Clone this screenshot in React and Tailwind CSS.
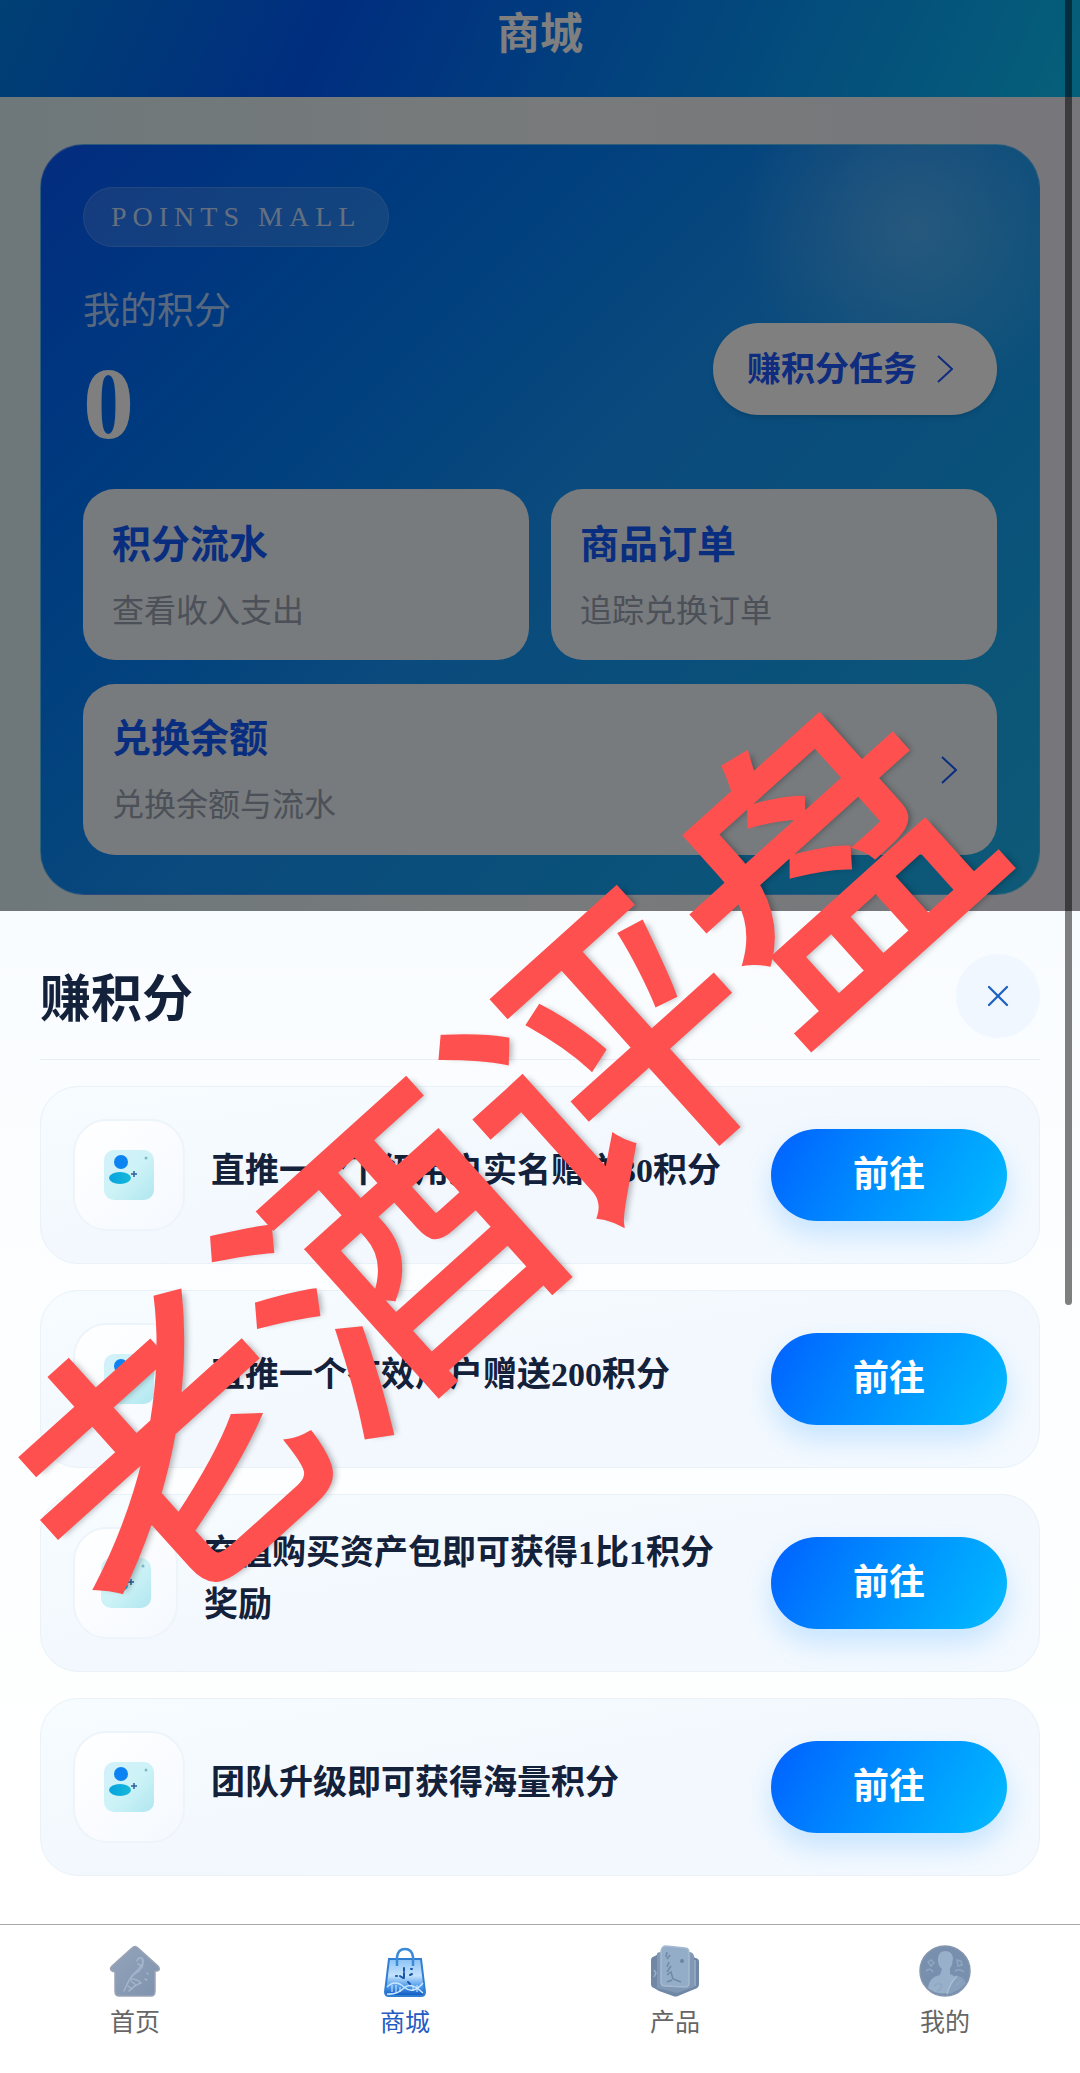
import { X } from "lucide-react"

const shortcuts = [
  { title: "积分流水", desc: "查看收入支出" },
  { title: "商品订单", desc: "追踪兑换订单" },
]

const tasks = [
  "直推一个下级用户实名赠送30积分",
  "直推一个有效用户赠送200积分",
  "充值购买资产包即可获得1比1积分奖励",
  "团队升级即可获得海量积分",
]

function HomeIcon() {
  return (
    <svg className="size-[52px]" viewBox="0 0 52 52">
      <defs>
        <linearGradient id="home" x1="0" y1="0" x2="1" y2="1">
          <stop offset="0" stopColor="#94a5bb" />
          <stop offset="1" stopColor="#7e92ae" />
        </linearGradient>
      </defs>
      <path
        d="M23 3Q26 0 29 3L49 21Q52 25 48 26L46 26V46Q46 51 42 51H10Q6 51 6 46V27L3 26Q0 24 3 21Z"
        fill="url(#home)"
        stroke="#9aa3b4"
        strokeWidth="1.5"
        strokeLinejoin="round"
      />
      <g fill="none" stroke="#a3b4c9" strokeWidth="1.5" strokeLinecap="round">
        <path d="M28 16q1-4 5-3 3 3-1 8t-8 9-9 16" />
        <path d="M33 14q3 6-3 12-8 4-8 8 6 0 10 4-6 2-12 8" />
        <path d="M29 19l4 2M22 36l5 4M19 41l4 3M38 28l1 1M36 34l2 1" />
      </g>
    </svg>
  )
}

function BagIcon() {
  return (
    <svg className="size-[52px]" viewBox="0 0 52 52">
      <defs>
        <linearGradient id="bag" x1="0" y1="0" x2="0" y2="1">
          <stop offset="0" stopColor="#8cc2f5" />
          <stop offset="0.45" stopColor="#c4e2fd" />
          <stop offset="0.75" stopColor="#4c98ea" />
          <stop offset="1" stopColor="#0b55bd" />
        </linearGradient>
      </defs>
      <path d="M10 14H42L46 47Q46 51 42 51H10Q6 51 6 47Z" fill="url(#bag)" stroke="#2f7ed0" strokeWidth="2" />
      <path d="M18 21V12Q19 4 26 4T34 12V21" fill="none" stroke="#3b8bd8" strokeWidth="2.5" />
      <path d="M8 42q8-8 17 0t19-4M8 49q10 1 17-6t19 5" fill="none" stroke="#c8e8ff" strokeWidth="1.5" />
      <path d="M13 40v7M17 40v8M21 42v5M34 41v5M38 40v7" stroke="#d7efff" strokeWidth="1" />
      <path d="M25 23v3M25 28v5M21 31l3 2M31 30l2-1M17 31h1M29 37l2 2M32 24h1" stroke="#1756a6" strokeWidth="2" strokeLinecap="round" />
    </svg>
  )
}

function ProductIcon() {
  return (
    <svg className="size-[52px]" viewBox="0 0 52 52">
      <path d="M2 15Q2 12 6 11L9 9H43L46 13Q50 13 50 17V39Q50 43 46 44L41 46 29 51Q27 52 24 51L10 46 5 43Q2 42 2 39Z" fill="#7088a5" />
      <path d="M8 9Q8 7 12 7H41Q45 8 45 12V42L28 48 8 43Z" fill="#8098b4" />
      <path d="M17 1 36 3Q40 3 40 8V38Q40 42 36 42L16 41Q12 41 12 37V6Q13 1 17 1Z" fill="#93acc8" stroke="#a5bad0" strokeWidth="1.5" />
      <path d="M18 7l-1 5M21 10l-3 4M20 17l-2 5M22 21l-4 6M18 30l4-3 2 7 8 3M18 37l5-2" fill="none" stroke="#6f88a5" strokeWidth="1.5" />
      <circle cx="33" cy="16" r="2" fill="#6a84a2" />
      <path d="M5 25l2 3-2 4M46 15v26" fill="none" stroke="#9ab0c8" strokeWidth="1.5" />
    </svg>
  )
}

function ProfileIcon() {
  return (
    <svg className="size-[52px]" viewBox="0 0 52 52">
      <circle cx="26" cy="26" r="25" fill="#7890ae" stroke="#8496ad" strokeWidth="1.5" />
      <path d="M9 43Q10 32 21 30L23 24Q18 20 19 13 20 6 26 6 33 6 34 13 34 19 31 24V29L37 32 28 48Q17 50 9 43Z" fill="#98b0ca" />
      <path d="M38 31Q31 38 28 49 40 47 47 38Q44 31 38 31Z" fill="#88a0bc" />
      <path d="M38 31Q31 38 28 49" fill="none" stroke="#a9bed3" strokeWidth="1.5" />
      <g fill="none" stroke="#90a7c1" strokeWidth="1.5">
        <path d="M9 17l3-2 3 3-3 3zM7 26q4-4 7 1M38 15l4 1 1 4-4 1zM36 26q5-3 9 1M37 40l5-4M15 41q4-4 8-1-1 5-5 6" />
      </g>
    </svg>
  )
}

const tabs = [
  { label: "首页", Icon: HomeIcon },
  { label: "商城", Icon: BagIcon, active: true },
  { label: "产品", Icon: ProductIcon },
  { label: "我的", Icon: ProfileIcon },
]

function Arrow() {
  return (
    <svg className="h-7 w-4" viewBox="0 0 16 28" fill="none" stroke="currentColor" strokeWidth="2">
      <path d="M1 1 15 14 1 27" />
    </svg>
  )
}

function InviteIcon() {
  return (
    <svg className="w-[50px]" viewBox="0 0 50 50">
      <defs>
        <linearGradient id="invite" x1="0" y1="0" x2="1" y2="1">
          <stop offset="0" stopColor="#d3f1f9" />
          <stop offset="0.5" stopColor="#cdf3f7" />
          <stop offset="1" stopColor="#b0e6f0" />
        </linearGradient>
        <linearGradient id="invite-body" x1="0" y1="0" x2="1" y2="0">
          <stop offset="0" stopColor="#06a3e0" />
          <stop offset="1" stopColor="#16b8d8" />
        </linearGradient>
      </defs>
      <rect width="50" height="50" rx="10" fill="url(#invite)" />
      <circle cx="17" cy="12" r="7" fill="#0b83f2" />
      <ellipse cx="16" cy="28" rx="11" ry="6" fill="url(#invite-body)" />
      <path d="M30 21v6M27 24h6" stroke="#2b5f9c" strokeWidth="1.5" />
      <circle cx="42" cy="8" r="1.5" fill="#7fb9c4" />
    </svg>
  )
}

function TaskRow({ text }) {
  return (
    <li className="flex h-[178px] items-center gap-[26px] rounded-[38px] border border-[#e8f2f8] bg-linear-to-br from-[#f6fcff] via-[#f3f8fe] to-[#f3f9ff] px-8">
      <span className="flex h-[112px] w-[112px] items-center justify-center rounded-[34px] border-2 border-[#edf4fa] bg-linear-to-br from-white to-[#f5f9ff]">
        <InviteIcon />
      </span>
      <p className="pb-2 text-[34px] leading-[52px] font-bold text-[#14213a]">{text}</p>
      <button className="ml-auto h-[92px] w-[236px] shrink-0 cursor-pointer rounded-full bg-linear-120 from-[#0a5fff] to-[#10bcff] text-[36px] font-bold text-white shadow-[0_14px_28px_rgba(20,150,255,0.2)]">
        前往
      </button>
    </li>
  )
}

export default function App() {
  return (
    <div className="relative flex min-h-screen flex-col overflow-hidden bg-white font-['Liberation_Serif','Noto_Sans_CJK_SC',sans-serif]">
      <div className="relative bg-linear-to-r from-[#dcf0f4] via-[#f0f5f7] to-[#eeeef6] pb-4">
        <header className="flex h-[97px] items-start justify-center bg-linear-[115deg] from-[#0080e8] via-[#005cff] via-30% to-[#0cc0f4] pt-1">
          <h1 className="text-[43px] leading-[62px] font-bold text-white">商城</h1>
        </header>

        <section className="relative mx-10 mt-[47px] overflow-hidden rounded-[44px] border border-white/30 bg-linear-135 from-[#0858ff] via-[#1494fa] to-[#1cb4ee] px-[42px] pt-[42px] pb-[39px]">
          <div className="absolute -top-24 -right-14 size-[360px] rounded-full bg-radial from-white/25 to-transparent to-70%" />

          <span className="inline-block rounded-full border border-white/15 bg-white/15 px-[27px] text-[28px] leading-[58px] tracking-[6px] text-white/75">
            POINTS MALL
          </span>

          <div className="mt-9 flex items-center justify-between">
            <div>
              <p className="text-[37px] leading-[58px] text-white/70">我的积分</p>
              <strong className="mt-2 block text-[102px] leading-[110px] text-white">0</strong>
            </div>
            <button className="relative mb-1 flex h-[92px] cursor-pointer items-center gap-5 rounded-full bg-white pr-11 pl-[34px] text-[34px] font-bold text-[#2058ff] shadow-md">
              赚积分任务
              <Arrow />
            </button>
          </div>

          <div className="mt-[30px] grid grid-cols-2 gap-x-[22px] gap-y-6">
            {shortcuts.map(({ title, desc }) => (
              <a key={title} href="#" className="h-[171px] rounded-[32px] bg-[#eef6fa] px-[29px] pt-7">
                <h2 className="text-[39px] leading-[56px] font-bold text-[#145cff]">{title}</h2>
                <p className="mt-[14px] text-[32px] leading-[48px] text-[#98a0b0]">{desc}</p>
              </a>
            ))}
            <a href="#" className="col-span-2 flex h-[171px] items-center justify-between rounded-[32px] bg-[#eef6fa] pr-10 pl-[29px]">
              <div>
                <h2 className="text-[39px] leading-[56px] font-bold text-[#145cff]">兑换余额</h2>
                <p className="mt-[14px] text-[32px] leading-[48px] text-[#98a0b0]">兑换余额与流水</p>
              </div>
              <span className="text-[#145cff]">
                <Arrow />
              </span>
            </a>
          </div>
        </section>

        <div className="absolute inset-0 bg-black/50" />
      </div>

      <section className="bg-linear-to-b from-[#f9fcff] via-[#fdfeff] to-white px-10 pb-12">
        <div className="flex h-[149px] items-center justify-between border-b border-[#e8eef4] pt-[22px]">
          <h2 className="pt-2 text-[51px] font-bold text-[#14213a]">赚积分</h2>
          <button aria-label="关闭" className="flex size-[84px] cursor-pointer items-center justify-center rounded-full bg-[#f0f7ff]">
            <X className="size-9 text-[#1c62c0]" strokeWidth={1.5} />
          </button>
        </div>

        <ul className="mt-[26px] flex flex-col gap-[26px]">
          {tasks.map((text) => (
            <TaskRow key={text} text={text} />
          ))}
        </ul>
      </section>

      <nav className="mt-auto grid h-[149px] grid-cols-4 border-t border-[#a8a8ac] bg-white pt-5">
        {tabs.map(({ label, Icon, active }) => (
          <a key={label} href="#" className="flex flex-col items-center">
            <Icon />
            <span className={active ? "mt-2 text-[25px] leading-9 text-[#1f5cc4]" : "mt-2 text-[25px] leading-9 text-[#666]"}>
              {label}
            </span>
          </a>
        ))}
      </nav>

      {/* scroll thumb */}
      <div className="absolute top-0 right-2 h-[1305px] w-[7px] rounded-b-full bg-black/50" />

      {/* watermark */}
      <div className="pointer-events-none absolute top-[1148px] right-[110px] left-0 flex h-0 items-center justify-center">
        <span className="-rotate-42 font-['Noto_Sans_CJK_SC',sans-serif] text-[296px] leading-none whitespace-nowrap text-[#ff5050] [-webkit-text-stroke:6px_#ff5050] text-shadow-[4px_4px_6px_rgba(0,0,0,0.3)]">
          老酒评盘
        </span>
      </div>
    </div>
  )
}
